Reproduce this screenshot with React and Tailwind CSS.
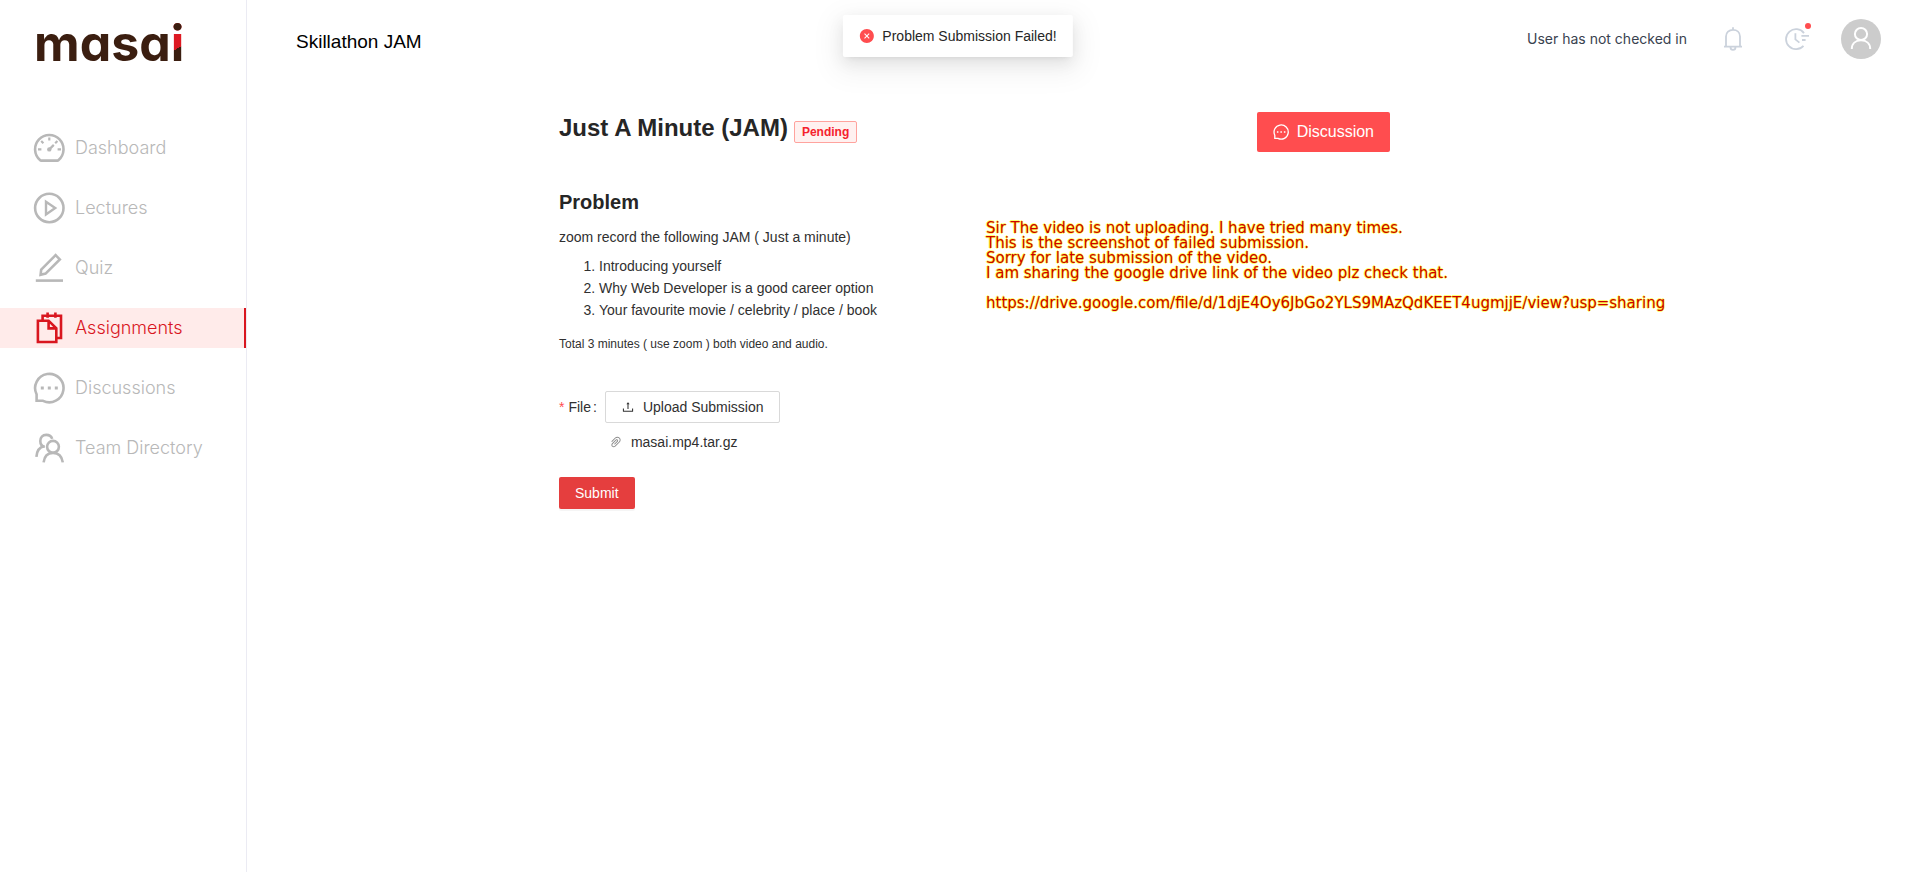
import React from "react";
import { AiFillCloseCircle, AiOutlinePaperClip, AiOutlineUpload } from "react-icons/ai";

const stroke = { fill: "none", stroke: "currentColor", strokeWidth: 2.6 };

function GaugeIcon() {
  return (
    <svg className="size-8 shrink-0" viewBox="0 0 32 32" aria-hidden="true" {...stroke}>
      <path d="M7 28 A14.2 14.2 0 1 1 25.6 28 Q25 28.6 24.4 28.6 H8.2 Q7.6 28.6 7 28 Z" />
      <path d="M16.3 5.5 V8.5 M8.2 9 L10.4 11.2 M24.4 9 L22.2 11.2 M5 17.4 H8.4 M24.6 17.4 H28 M16.3 17.4 L20.8 12.9" strokeWidth="2.2" />
      <circle cx="16.3" cy="17.4" r="2.2" fill="currentColor" stroke="none" />
    </svg>
  );
}

function PlayIcon() {
  return (
    <svg className="size-8 shrink-0" viewBox="0 0 32 32" aria-hidden="true" {...stroke}>
      <circle cx="16.3" cy="16" r="14.2" />
      <path d="M13 9.8 V22.4 L22.2 16 Z" strokeWidth="2.4" />
    </svg>
  );
}

function PencilIcon() {
  return (
    <svg className="size-8 shrink-0" viewBox="0 0 32 32" aria-hidden="true" {...stroke}>
      <path d="M2.8 28.6 H30" />
      <path d="M8.2 17.6 L22.6 3.2 L26.8 7.4 L12.6 21.6 L7.6 22.8 Z" />
    </svg>
  );
}

function PapersIcon() {
  return (
    <svg className="size-8 shrink-0" viewBox="0 0 32 32" aria-hidden="true" {...stroke}>
      <path d="M4.9 8.7 H15.6 L23.3 16.4 V30 H4.9 Z M15.6 8.7 V16.4 H23.3" />
      <path d="M9.6 8 V3.8 H28 V26 H24" />
      <path d="M14.6 0.4 V5.8 M22.4 0.4 V5.8" />
    </svg>
  );
}

function ChatIcon({ className = "size-8" }) {
  return (
    <svg className={className + " shrink-0"} viewBox="0 0 32 32" aria-hidden="true" {...stroke}>
      <path d="M3.6 28.8 V22.4 A14.2 14.2 0 1 1 10 28.8 Z" />
      <path d="M7.8 16 H10.8 M14.8 16 H17.8 M21.8 16 H24.8" strokeWidth="3" />
    </svg>
  );
}

function PeopleIcon() {
  return (
    <svg className="size-8 shrink-0" viewBox="0 0 32 32" aria-hidden="true" {...stroke}>
      <circle cx="20" cy="14.8" r="5.9" />
      <path d="M10.6 30.4 C11.4 24 15 20.9 20 20.9 S28.8 24 29.8 30.4" />
      <path d="M19.2 6.8 C18.4 4.2 16 2.9 13.2 2.9 C9.6 2.9 7.3 5.6 7.3 9 C7.3 12.2 9.2 14.4 11.8 14.8" />
      <path d="M11.2 14.2 C6.6 15 3.8 19 3.4 24.8" />
    </svg>
  );
}

function BellIcon() {
  return (
    <svg className="h-6 w-5" viewBox="0 0 20 24" aria-hidden="true" fill="none" stroke="currentColor" strokeWidth="1.8">
      <path d="M3 19.5 V9.5 C3 5.5 6 2.8 10 2.8 S17 5.5 17 9.5 V19.5 M1 19.6 H19 M10 0.2 V2.8 M7.5 20.2 C7.5 23.8 12.5 23.8 12.5 20.2" />
    </svg>
  );
}

function ClockIcon() {
  return (
    <svg className="size-6" viewBox="0 0 24 24" aria-hidden="true" fill="none" stroke="currentColor" strokeWidth="1.8">
      <path d="M19 6.1 A10 10 0 1 0 18.5 18.8 M10.4 6.3 V12.4 L14.4 15.6 M16.4 8.9 H24 M17 13 H20.6" />
    </svg>
  );
}

function UserIcon() {
  return (
    <svg className="size-10" viewBox="0 0 40 40" aria-hidden="true" fill="none" stroke="white" strokeWidth="2">
      <circle cx="20" cy="15" r="6.1" />
      <path d="M10.8 30 C10.8 24.6 14.5 21.3 20 21.3 S29.2 24.6 29.2 30" />
    </svg>
  );
}

const links = [
  ["Dashboard", GaugeIcon],
  ["Lectures", PlayIcon],
  ["Quiz", PencilIcon],
  ["Assignments", PapersIcon],
  ["Discussions", ChatIcon],
  ["Team Directory", PeopleIcon],
];

function Sidebar() {
  return (
    <aside className="w-[247px] shrink-0 border-r border-[#ebebf3]">
      <a
        href="#home"
        className="ml-[34px] mt-[13px] block font-['Inter',sans-serif] text-[50px] leading-[60px] font-bold text-[#3b1e10] [font-feature-settings:'cv11']"
      >
        masa
        <span className="bg-[linear-gradient(#3b1e10_20px,transparent_20px),linear-gradient(150deg,#dd1922_58%,#3b1e10_58%)] bg-clip-text text-transparent">i</span>
      </a>
      <nav className="mt-[55px] flex flex-col gap-5">
        {links.map(([name, Icon]) => (
          <a
            key={name}
            href={"#" + name.toLowerCase().replace(" ", "-")}
            className={
              "flex h-10 items-center gap-[10px] pl-[33px] font-['Inter',sans-serif] text-lg leading-6 font-light " +
              (name === "Assignments"
                ? "border-r-2 border-[#d9161f] bg-[#ffebea] text-[#d9161f]"
                : "text-[#b8b8b8]")
            }
          >
            <Icon />
            {name}
          </a>
        ))}
      </nav>
    </aside>
  );
}

function Header() {
  return (
    <header className="flex h-20 items-start justify-between pr-[34px] pl-[49px]">
      <h1 className="pt-7 text-[19px] leading-7 text-black">Skillathon JAM</h1>
      <div className="flex items-center pt-[19px]">
        <span className="font-['Inter',sans-serif] text-sm text-[#39424f]">User has not checked in</span>
        <button type="button" aria-label="Notifications" className="ml-9 text-[#cbd2dc]">
          <BellIcon />
        </button>
        <button type="button" aria-label="Activity" className="relative ml-[42px] text-[#cbd2dc]">
          <ClockIcon />
          <span className="absolute -top-1 -right-0.5 size-1.5 rounded-full bg-[#ff4d4f]" />
        </button>
        <button type="button" aria-label="Account" className="ml-8 rounded-full bg-[#cccccc]">
          <UserIcon />
        </button>
      </div>
    </header>
  );
}

export default function App() {
  return (
    <div className="relative flex min-h-screen bg-white font-['Liberation_Sans',Arial,sans-serif] text-sm leading-[22px] text-[#303030]">
      <Sidebar />
      <div className="min-w-0 flex-1">
        <Header />
        <main className="relative ml-78 max-w-[831px] pt-8">
          <div className="flex items-start justify-between">
            <div className="flex items-center gap-1.5">
              <h2 className="text-2xl leading-8 font-bold text-[#262626]">Just A Minute (JAM)</h2>
              <span className="mt-2 rounded-xs border border-[#ffa39e] bg-[#fff1f0] px-[7px] text-xs leading-5 font-bold text-[#f5222d]">
                Pending
              </span>
            </div>
            <button type="button" className="flex h-10 items-center gap-2 rounded-xs bg-[#ff4d4f] px-4 text-base text-white">
              <ChatIcon className="size-4" />
              Discussion
            </button>
          </div>

          <section className="pt-9">
            <h3 className="text-xl leading-7 font-bold text-[#262626]">Problem</h3>
            <p className="mt-2.5">zoom record the following JAM ( Just a minute)</p>
            <ol className="mt-[7px] list-decimal pl-10">
              <li>Introducing yourself</li>
              <li>Why Web Developer is a good career option</li>
              <li>Your favourite movie / celebrity / place / book</li>
            </ol>
            <p className="mt-3 text-xs leading-[22px]">Total 3 minutes ( use zoom ) both video and audio.</p>
          </section>

          <form className="mt-9" onSubmit={(e) => e.preventDefault()}>
            <div className="flex items-start gap-2">
              <label htmlFor="upload" className="flex gap-0.5 leading-8">
                <span className="mr-0.5 text-[#ff4d4f]">*</span>
                <span>File</span>
                <span>:</span>
              </label>
              <div>
                <button
                  id="upload"
                  type="button"
                  className="flex h-8 items-center gap-2 rounded-xs border border-[#d9d9d9] px-[15px]"
                >
                  <AiOutlineUpload className="size-3.5" />
                  Upload Submission
                </button>
                <div className="mt-2 flex items-center gap-2 pl-1">
                  <AiOutlinePaperClip className="size-3.5 text-[#8c8c8c]" />
                  masai.mp4.tar.gz
                </div>
              </div>
            </div>
            <button
              type="submit"
              className="mt-6 h-8 rounded-xs bg-[#e53e3e] px-4 text-white shadow-[0_2px_0_rgba(0,0,0,0.04)]"
            >
              Submit
            </button>
          </form>

          <div className="absolute top-[141px] left-[427px] font-['DejaVu_Sans',sans-serif] text-[15px] leading-[15px] whitespace-nowrap text-[#cc0000] [text-shadow:1px_0_#ffff0090,-1px_0_#ffff0090,0_1px_#ffff0090,0_-1px_#ffff0090]">
            <p>Sir The video is not uploading. I have tried many times.</p>
            <p>This is the screenshot of failed submission.</p>
            <p>Sorry for late submission of the video.</p>
            <p>I am sharing the google drive link of the video plz check that.</p>
            <p className="mt-[15px]">https://drive.google.com/file/d/1djE4Oy6JbGo2YLS9MAzQdKEET4ugmjjE/view?usp=sharing</p>
          </div>
        </main>
      </div>

      <div
        role="alert"
        className="absolute top-[15px] left-1/2 flex h-[42px] -translate-x-1/2 items-center gap-2 rounded-xs bg-white px-4 whitespace-nowrap text-[#262626] shadow-[0_3px_6px_-4px_rgba(0,0,0,0.12),0_6px_16px_0_rgba(0,0,0,0.08),0_9px_28px_8px_rgba(0,0,0,0.05)]"
      >
        <AiFillCloseCircle className="size-4 text-[#ff4d4f]" />
        Problem Submission Failed!
      </div>
    </div>
  );
}
